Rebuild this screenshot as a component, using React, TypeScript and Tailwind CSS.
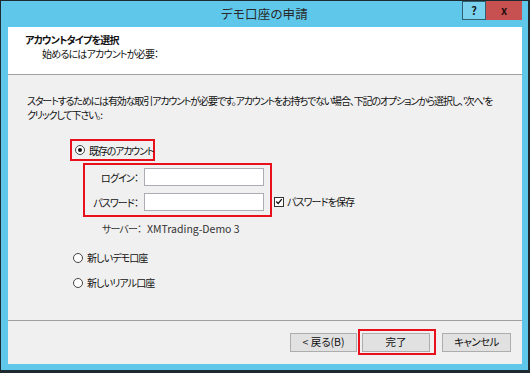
import React from "react";

const font = "font-['Noto_Sans_CJK_JP','Noto_Sans',sans-serif] [font-feature-settings:'palt']";

function Radio({ checked }: { checked?: boolean }) {
  return (
    <span className="relative flex h-[10px] w-[10px] shrink-0 items-center justify-center rounded-full border border-[#444] bg-white">
      {checked && <span className="h-[4px] w-[4px] rounded-full bg-[#111]" />}
    </span>
  );
}

function Btn({ children, className = "" }: { children: React.ReactNode; className?: string }) {
  return (
    <div
      className={`flex h-[19px] items-center justify-center whitespace-nowrap border border-[#adadad] bg-[#e1e1e1] text-[10.5px] text-[#111] ${className}`}
    >
      {children}
    </div>
  );
}

export default function App() {
  return (
    <div className={`h-[373px] w-[530px] overflow-hidden bg-[#1d2a30] pl-px pt-px pr-[2px] pb-[3px] ${font}`}>
      <div className="flex h-full w-full flex-col bg-[#5fc8ea] pb-[6px] pl-[7px] pr-[6px]">
        {/* Title bar */}
        <div className="-ml-[7px] -mr-[6px] grid h-[26px] shrink-0 grid-cols-[1fr_auto_1fr]">
          <div />
          <div className="pt-[5px] text-[12.5px] leading-[16px] tracking-[0.2px] text-[#2a2a2a]">デモ口座の申請</div>
          <div className="flex items-start justify-end pr-[6px]">
            <div className="flex h-[19px] w-[24px] items-center justify-center border border-[#2f5f70] bg-[#7ad2ee] text-[11px] font-bold leading-none text-[#1a1a1a]">
              ?
            </div>
            <div className="flex h-[19px] w-[36px] items-center justify-center bg-[#c75050] text-[11px] font-bold leading-none text-[#2a1010]">
              x
            </div>
          </div>
        </div>

        {/* Content */}
        <div className="flex flex-1 flex-col bg-[#f0f0f0]">
          {/* Header */}
          <div className="flex h-[48px] shrink-0 flex-col whitespace-nowrap border-b border-[#a0a0a0] bg-white pl-[17px] pt-[6px] text-[10px] leading-[14px] tracking-[-0.8px] text-[#111]">
            <span className="font-bold">アカウントタイプを選択</span>
            <span className="pl-[17px]">始めるにはアカウントが必要：</span>
          </div>

          {/* Body */}
          <div className="flex h-[246px] shrink-0 flex-col whitespace-nowrap border-b border-[#a0a0a0] text-[10px] tracking-[-0.9px] text-[#111]">
            <div className="flex flex-col pl-[19px] pt-[19px] leading-[14px] tracking-[-1.15px]">
              <span>
                スタートするためには有効な取引アカウントが必要です。アカウントをお持ちでない場合、下記のオプションから選択し、'次へ'を
              </span>
              <span>クリックして下さい。:</span>
            </div>

            {/* Existing account */}
            <div className="ml-[62px] mt-[17px] flex h-[22px] w-[85px] items-center gap-[4px] border-2 border-[#e8101a] pl-[3px]">
              <Radio checked />
              <span className="tracking-[-1.2px]">既存のアカウント</span>
            </div>

            <div className="ml-[75px] mt-[2px] flex items-end">
              <div className="flex h-[54px] w-[189px] flex-col gap-[7px] border-2 border-[#e8101a] pt-[3px]">
                <div className="flex items-center">
                  <span className="w-[53px] text-right">ログイン：</span>
                  <div className="ml-[6px] h-[18px] w-[120px] border border-[#abadb3] bg-white" />
                </div>
                <div className="flex items-center">
                  <span className="w-[53px] text-right">パスワード：</span>
                  <div className="ml-[6px] h-[18px] w-[120px] border border-[#abadb3] bg-white" />
                </div>
              </div>
              <div className="mb-[8px] ml-[2px] flex items-center gap-[3px]">
                <span className="flex h-[10px] w-[10px] items-center justify-center border border-[#333] bg-white">
                  <svg viewBox="0 0 10 10" className="h-[9px] w-[9px]">
                    <path d="M1.5 5 L4 7.5 L8.5 2" fill="none" stroke="#111" strokeWidth="1.6" />
                  </svg>
                </span>
                <span>パスワードを保存</span>
              </div>
            </div>

            <div className="ml-[77px] mt-[4px] flex h-[15px] items-center text-[#333]">
              <span className="w-[56px] text-right">サーバー：</span>
              <span className="ml-[6px] text-[10.5px] tracking-[0px]">XMTrading-Demo 3</span>
            </div>

            <div className="ml-[65px] mt-[14px] flex h-[15px] items-center gap-[4px]">
              <Radio />
              <span>新しいデモ口座</span>
            </div>
            <div className="ml-[65px] mt-[10px] flex h-[15px] items-center gap-[4px]">
              <Radio />
              <span>新しいリアル口座</span>
            </div>
          </div>

          {/* Footer */}
          <div className="flex flex-1 items-center justify-end pb-[1px] pr-[11px]">
            <Btn className="w-[67px]">&lt; 戻る(B)</Btn>
            <div className="ml-px flex h-[26px] items-center border-2 border-[#e8101a] pl-[2px] pr-[4px]">
              <Btn className="w-[68px] border-[#3c7fb1]">完了</Btn>
            </div>
            <Btn className="ml-[6px] w-[69px] tracking-[-0.6px]">キャンセル</Btn>
          </div>
        </div>
      </div>
    </div>
  );
}
